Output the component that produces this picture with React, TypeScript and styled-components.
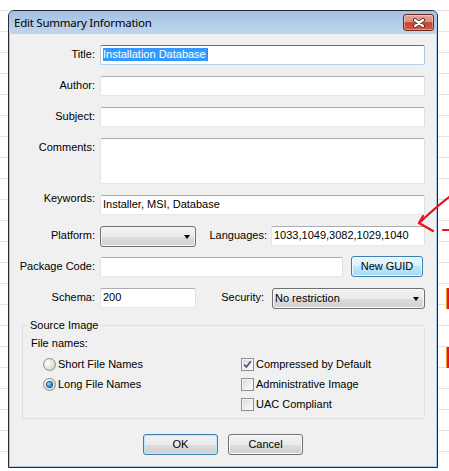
import React from "react";
import styled, { createGlobalStyle, css } from "styled-components";

const GlobalStyle = createGlobalStyle`
  html, body { margin: 0; padding: 0; }
  body {
    width: 449px;
    height: 471px;
    overflow: hidden;
    background-color: #ffffff;
    background-image: repeating-linear-gradient(
      to bottom,
      transparent 0px,
      transparent 20px,
      #e3e3e3 20px,
      #e3e3e3 21px
    );
    background-position: 0 -10px;
    font-family: "Liberation Sans", Arial, sans-serif;
    font-size: 11px;
    color: #000;
  }
`;

const Page = styled.div`
  position: relative;
  width: 449px;
  height: 471px;
  box-sizing: border-box;
  padding: 10px 0 0 8px;
`;

const Window = styled.div`
  width: 430px;
  height: 458px;
  box-sizing: border-box;
  border: 1px solid #262b31;
  border-radius: 6px 6px 0 0;
  display: flex;
  flex-direction: column;
  background: #b9d1ea;
`;

const TitleBar = styled.div`
  height: 23px;
  flex: none;
  display: flex;
  align-items: flex-start;
  justify-content: space-between;
  padding: 0 3px 0 5px;
  border-radius: 5px 5px 0 0;
  background: linear-gradient(to bottom, #a3c1e2 0%, #b3cce8 55%, #c1d6ed 100%);
`;

const TitleText = styled.span`
  font-family: "Noto Sans", "Open Sans", sans-serif;
  font-size: 11.5px;
  letter-spacing: -0.25px;
  line-height: 23px;
  color: #000;
`;

const CloseButton = styled.div`
  margin-top: 3px;
  width: 31px;
  height: 17px;
  box-sizing: border-box;
  border: 1px solid #6b2b22;
  border-radius: 3px;
  background: linear-gradient(
    to bottom,
    #e6a898 0%,
    #d98c7a 45%,
    #c5432d 52%,
    #cf5f48 100%
  );
  box-shadow: inset 0 0 0 1px rgba(255, 220, 210, 0.45);
  display: flex;
  align-items: center;
  justify-content: center;
`;

const Body = styled.div`
  flex: 1;
  background: #f0f0f0;
  border: 1px solid #a9c9e6;
  border-top: none;
  padding-top: 11px;
  display: flex;
  flex-direction: column;
`;

const Row = styled.div<{ $h?: number }>`
  display: flex;
  align-items: flex-start;
  height: ${(p) => p.$h ?? 20}px;
  margin-bottom: 11px;
  flex: none;
`;

const Label = styled.div<{ $w: number; $gap: number; $top?: number }>`
  flex: none;
  width: ${(p) => p.$w}px;
  margin-right: ${(p) => p.$gap}px;
  margin-top: ${(p) => p.$top ?? 3}px;
  text-align: right;
  line-height: 13px;
  white-space: nowrap;
`;

const TextBox = styled.div<{ $w: number; $h?: number; $focused?: boolean }>`
  flex: none;
  width: ${(p) => p.$w}px;
  height: ${(p) => p.$h ?? 20}px;
  box-sizing: border-box;
  background: #fff;
  border: 1px solid;
  border-color: #abadb3 #dbdfe6 #e3e9ef #e2e3ea;
  border-radius: 2px;
  padding: 2px 2px 0;
  line-height: 13px;
  white-space: nowrap;
  overflow: hidden;
  ${(p) =>
    p.$focused &&
    css`
      border-color: #3d7bad #a4c9e3 #b5cfe7 #b5cfe7;
    `}
`;

const Selected = styled.span`
  display: inline-block;
  background: #3399ff;
  color: #fff;
  line-height: 13px;
  padding-right: 1px;
`;

const Caret = styled.span`
  display: inline-block;
  width: 1px;
  height: 13px;
  vertical-align: top;
  background: #cc6600;
`;

const Combo = styled.div<{ $w: number }>`
  flex: none;
  width: ${(p) => p.$w}px;
  height: 21px;
  box-sizing: border-box;
  border: 1px solid #707070;
  border-radius: 3px;
  background: linear-gradient(
    to bottom,
    #f2f2f2 0%,
    #ebebeb 50%,
    #dddddd 50%,
    #cfcfcf 100%
  );
  box-shadow: inset 0 0 0 1px #f8f8f8;
  display: flex;
  align-items: center;
  justify-content: space-between;
  padding: 0 5px 0 2px;
  line-height: 13px;
`;

const Arrow = styled.span`
  width: 0;
  height: 0;
  border-left: 3.5px solid transparent;
  border-right: 3.5px solid transparent;
  border-top: 4px solid #000;
`;

const Button = styled.div<{ $w: number; $kind?: "normal" | "default" | "hot" }>`
  flex: none;
  width: ${(p) => p.$w}px;
  height: 21px;
  box-sizing: border-box;
  border: 1px solid #707070;
  border-radius: 3px;
  background: linear-gradient(
    to bottom,
    #f2f2f2 0%,
    #ebebeb 50%,
    #dddddd 50%,
    #cfcfcf 100%
  );
  box-shadow: inset 0 0 0 1px #fbfbfb;
  display: flex;
  align-items: center;
  justify-content: center;
  line-height: 13px;
  ${(p) =>
    p.$kind === "default" &&
    css`
      border-color: #3c7fb1;
      box-shadow: inset 0 0 0 1px #b9eafc;
    `}
  ${(p) =>
    p.$kind === "hot" &&
    css`
      border-color: #3c7fb1;
      background: linear-gradient(
        to bottom,
        #eaf6fd 0%,
        #d9f0fc 50%,
        #bee6fd 50%,
        #a7d9f5 100%
      );
      box-shadow: inset 0 0 0 1px #f2fafe;
    `}
`;

const GroupBox = styled.fieldset`
  margin: 0 0 0 12px;
  width: 403px;
  box-sizing: border-box;
  padding: 0 5px 4px;
  border: 1px solid #d5dfe5;
  border-radius: 3px;
  flex: none;
`;

const Legend = styled.legend`
  padding: 0 2px;
  line-height: 13px;
`;

const FieldCaption = styled.div`
  margin: 5px 0 4px 3px;
  line-height: 13px;
`;

const Options = styled.div`
  display: flex;
`;

const OptionColumn = styled.div<{ $w?: number; $indent: number }>`
  display: flex;
  flex-direction: column;
  width: ${(p) => (p.$w ? `${p.$w}px` : "auto")};
  padding-left: ${(p) => p.$indent}px;
  box-sizing: border-box;
  flex: none;
`;

const Option = styled.div`
  display: flex;
  align-items: center;
  height: 20px;
  line-height: 13px;
`;

const RadioMark = styled.span<{ $checked?: boolean }>`
  flex: none;
  width: 13px;
  height: 13px;
  box-sizing: border-box;
  margin-right: 2px;
  border-radius: 50%;
  border: 1px solid #8d8d8d;
  background: radial-gradient(circle at 35% 35%, #fdfdfd 0%, #e8e8e8 45%, #c9c9c9 100%);
  display: flex;
  align-items: center;
  justify-content: center;
  &::after {
    content: "";
    display: ${(p) => (p.$checked ? "block" : "none")};
    width: 5px;
    height: 5px;
    border-radius: 50%;
    background: radial-gradient(circle at 35% 35%, #9fe0fa 0%, #2a8ad4 55%, #0d4a8c 100%);
    box-shadow: 0 0 0 1px #1a4f84;
  }
`;

const CheckMark = styled.span`
  flex: none;
  width: 13px;
  height: 13px;
  box-sizing: border-box;
  margin-right: 2px;
  border: 1px solid #8f8f8f;
  background: linear-gradient(135deg, #d6d6d6 0%, #f0f0f0 60%, #fbfbfb 100%);
  box-shadow: inset 0 0 0 1px #f4f4f4;
  display: flex;
  align-items: center;
  justify-content: center;
`;

const ButtonRow = styled.div`
  display: flex;
  justify-content: center;
  gap: 10px;
  margin-top: 15px;
`;

const Annotations = styled.svg`
  position: absolute;
  left: 0;
  top: 0;
  pointer-events: none;
`;

function Radio({ checked, children }: { checked?: boolean; children: React.ReactNode }) {
  return (
    <Option>
      <RadioMark $checked={checked} />
      <span>{children}</span>
    </Option>
  );
}

function Check({ checked, children }: { checked?: boolean; children: React.ReactNode }) {
  return (
    <Option>
      <CheckMark>
        {checked && (
          <svg width="9" height="9" viewBox="0 0 9 9">
            <path d="M1.2 4.6 L3.4 7 L7.8 1.2" fill="none" stroke="#3f5279" strokeWidth="1.6" />
          </svg>
        )}
      </CheckMark>
      <span>{children}</span>
    </Option>
  );
}

export default function App() {
  return (
    <>
      <GlobalStyle />
      <Page>
        <Window>
          <TitleBar>
            <TitleText>Edit Summary Information</TitleText>
            <CloseButton>
              <svg width="14" height="10" viewBox="0 0 14 10">
                <path d="M3 2 L11 8 M11 2 L3 8" stroke="#5a2219" strokeWidth="4" strokeLinecap="round" />
                <path d="M3 2 L11 8 M11 2 L3 8" stroke="#ffffff" strokeWidth="2.2" strokeLinecap="round" />
              </svg>
            </CloseButton>
          </TitleBar>
          <Body>
            <Row>
              <Label $w={85} $gap={5}>Title:</Label>
              <TextBox $w={325} $focused>
                <Selected>Installation Database</Selected>
                <Caret />
              </TextBox>
            </Row>
            <Row>
              <Label $w={85} $gap={5}>Author:</Label>
              <TextBox $w={325} />
            </Row>
            <Row>
              <Label $w={85} $gap={5}>Subject:</Label>
              <TextBox $w={325} />
            </Row>
            <Row $h={46}>
              <Label $w={85} $gap={5}>Comments:</Label>
              <TextBox $w={325} $h={46} />
            </Row>
            <Row>
              <Label $w={85} $gap={5} $top={-3}>Keywords:</Label>
              <TextBox $w={325}>Installer, MSI, Database</TextBox>
            </Row>
            <Row>
              <Label $w={85} $gap={5}>Platform:</Label>
              <Combo $w={96}>
                <span />
                <Arrow />
              </Combo>
              <Label $w={71} $gap={4}>Languages:</Label>
              <TextBox $w={154}>1033,1049,3082,1029,1040</TextBox>
            </Row>
            <Row>
              <Label $w={85} $gap={5}>Package Code:</Label>
              <TextBox $w={243} />
              <Button $w={72} $kind="hot" style={{ marginLeft: 8, marginTop: -1 }}>
                New GUID
              </Button>
            </Row>
            <Row>
              <Label $w={85} $gap={5}>Schema:</Label>
              <TextBox $w={96}>200</TextBox>
              <Label $w={68} $gap={8}>Security:</Label>
              <Combo $w={153}>
                <span>No restriction</span>
                <Arrow />
              </Combo>
            </Row>
            <GroupBox>
              <Legend>Source Image</Legend>
              <FieldCaption>File names:</FieldCaption>
              <Options>
                <OptionColumn $w={213} $indent={15}>
                  <Radio>Short File Names</Radio>
                  <Radio checked>Long File Names</Radio>
                </OptionColumn>
                <OptionColumn $indent={0}>
                  <Check checked>Compressed by Default</Check>
                  <Check>Administrative Image</Check>
                  <Check>UAC Compliant</Check>
                </OptionColumn>
              </Options>
            </GroupBox>
            <ButtonRow>
              <Button $w={75} $kind="default">OK</Button>
              <Button $w={75}>Cancel</Button>
            </ButtonRow>
          </Body>
        </Window>
        <Annotations width="449" height="471" viewBox="0 0 449 471">
          <g stroke="#e8141c" strokeWidth="2.2" fill="none" strokeLinecap="round" strokeLinejoin="round">
            <path d="M449 197 Q436 207 419 223" />
            <path d="M419 223 L423 216" />
            <path d="M419 223 L433 231" />
            <path d="M443 230 L449 230" />
          </g>
          <rect x="446" y="288" width="1" height="21" fill="#f29a2e" />
          <rect x="447" y="288" width="2" height="21" fill="#e8141c" />
          <rect x="446" y="347" width="1" height="21" fill="#f29a2e" />
          <rect x="447" y="347" width="2" height="21" fill="#e8141c" />
        </Annotations>
      </Page>
    </>
  );
}
